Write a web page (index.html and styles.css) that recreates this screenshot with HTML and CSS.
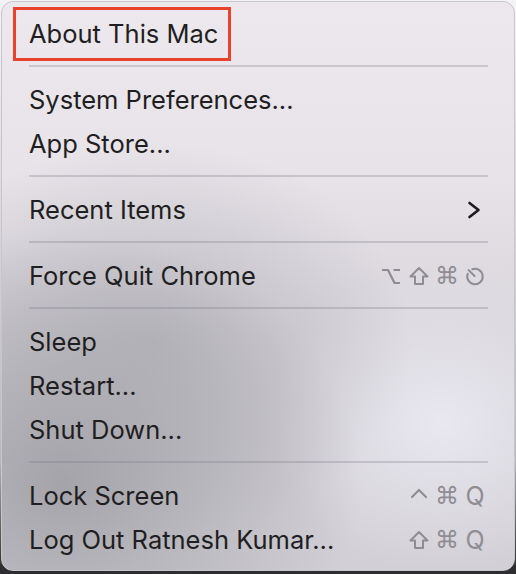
FILE: index.html
```html
<!DOCTYPE html>
<html lang="en">
<head>
    <meta charset="UTF-8">
    <meta name="viewport" content="width=device-width, initial-scale=1.0">
    <title>Apple Menu</title>
    <link rel="stylesheet" href="styles.css">
</head>
<body>
<div class="menu">
    <div class="item"><span class="label marked">About This Mac</span></div>
    <div class="sep"></div>

    <div class="item"><span class="label">System Preferences...</span></div>
    <div class="item"><span class="label">App Store...</span></div>
    <div class="sep"></div>

    <div class="item">
        <span class="label">Recent Items</span>
        <svg class="chevron" width="14" height="18" viewBox="0 0 14 18">
            <path d="M2.5 2 L11.5 9 L2.5 16" fill="none" stroke="#1c1c1e" stroke-width="2.6" stroke-linecap="round" stroke-linejoin="round"/>
        </svg>
    </div>
    <div class="sep"></div>

    <div class="item">
        <span class="label">Force Quit Chrome</span>
        <span class="keys">
            <!-- option glyph -->
            <svg class="key" width="20" height="20" viewBox="0 0 20 20">
                <path d="M1 4 L7 4 L13.5 17 L19 17 M12.5 4 L19 4" fill="none" stroke="#8f8d93" stroke-width="2.2" stroke-linejoin="round"/>
            </svg>
            <svg class="key" width="20" height="20" viewBox="0 0 20 20">
                <path d="M10 2 L18.5 10.5 L14 10.5 L14 18 L6 18 L6 10.5 L1.5 10.5 Z" fill="none" stroke="#8f8d93" stroke-width="2" stroke-linejoin="round"/>
            </svg>
            <span class="key cmd">⌘</span>
            <!-- escape glyph -->
            <svg class="key" width="21" height="21" viewBox="0 0 22 22">
                <path d="M8 3 A8.5 8.5 0 1 1 3 8" fill="none" stroke="#8f8d93" stroke-width="2.2" stroke-linecap="round"/>
                <path d="M4 4 L10.5 10.5" fill="none" stroke="#8f8d93" stroke-width="2.2" stroke-linecap="round"/>
            </svg>
        </span>
    </div>
    <div class="sep"></div>

    <div class="item"><span class="label">Sleep</span></div>
    <div class="item"><span class="label">Restart...</span></div>
    <div class="item"><span class="label">Shut Down...</span></div>
    <div class="sep"></div>

    <div class="item">
        <span class="label">Lock Screen</span>
        <span class="keys">
            <svg class="key" width="20" height="20" viewBox="0 0 20 20">
                <path d="M3 11 L10 4 L17 11" fill="none" stroke="#8f8d93" stroke-width="2.2" stroke-linecap="round" stroke-linejoin="round"/>
            </svg>
            <span class="key cmd">⌘</span><span class="key q">Q</span>
        </span>
    </div>
    <div class="item">
        <span class="label">Log Out Ratnesh Kumar...</span>
        <span class="keys">
            <svg class="key" width="20" height="20" viewBox="0 0 20 20">
                <path d="M10 2 L18.5 10.5 L14 10.5 L14 18 L6 18 L6 10.5 L1.5 10.5 Z" fill="none" stroke="#8f8d93" stroke-width="2" stroke-linejoin="round"/>
            </svg>
            <span class="key cmd">⌘</span><span class="key q">Q</span>
        </span>
    </div>
</div>
</body>
</html>
```

FILE: styles.css
```css
html, body {
    margin: 0;
    height: 100%;
}
body {
    width: 516px;
    height: 574px;
    overflow: hidden;
    background: linear-gradient(to bottom, #f4f3f5 0%, #b9b8bd 80%, #2e2e30 99%);
    font-family: Inter, "Noto Sans", sans-serif;
}
.menu {
    position: relative;
    box-sizing: border-box;
    width: 514px;
    height: 570px;
    margin: 1px 0 0 1px;
    padding: 9px 0 9px;
    border: 1px solid #c8c6cb;
    border-radius: 12px;
    color: #1f1e21;
    background:
        radial-gradient(ellipse 300px 250px at 60px 480px, rgba(160, 159, 166, 0.9), rgba(160, 159, 166, 0) 100%),
        radial-gradient(ellipse 260px 200px at 150px 340px, rgba(168, 167, 174, 0.6), rgba(168, 167, 174, 0) 100%),
        radial-gradient(ellipse 180px 150px at 440px 420px, rgba(234, 232, 240, 0.95), rgba(234, 232, 240, 0) 100%),
        linear-gradient(to bottom, #ece8ed 0%, #e7e3e9 30%, #d8d5db 58%, #d2d0d6 100%);
}
.item {
    display: flex;
    align-items: center;
    justify-content: space-between;
    height: 44px;
    padding: 0 29px 0 27px;
    font-size: 25.5px;
    line-height: 44px;
}
.label {
    position: relative;
    padding-top: 2px;
}
/* red annotation box */
.marked::after {
    content: "";
    position: absolute;
    left: -16px;
    right: -13px;
    top: -3px;
    bottom: -5px;
    border: 3px solid #e8422c;
}
.sep {
    height: 22px;
    display: flex;
    align-items: center;
    padding: 0 26px 0 27px;
}
.sep::before {
    content: "";
    flex: 1;
    height: 2px;
    background: rgba(120, 116, 126, 0.28);
}
.chevron {
    margin-right: 4px;
    margin-top: 2px;
}
.keys {
    display: flex;
    align-items: center;
    gap: 8px;
    color: #8f8d93;
    font-family: "DejaVu Sans", sans-serif;
    font-size: 23px;
    padding-top: 2px;
}
.key {
    display: flex;
    justify-content: center;
    width: 20px;
    overflow: visible;
}
.key.cmd {
    font-size: 24px;
}
.key.q {
    font-family: Inter, sans-serif;
    font-size: 25px;
}
```
